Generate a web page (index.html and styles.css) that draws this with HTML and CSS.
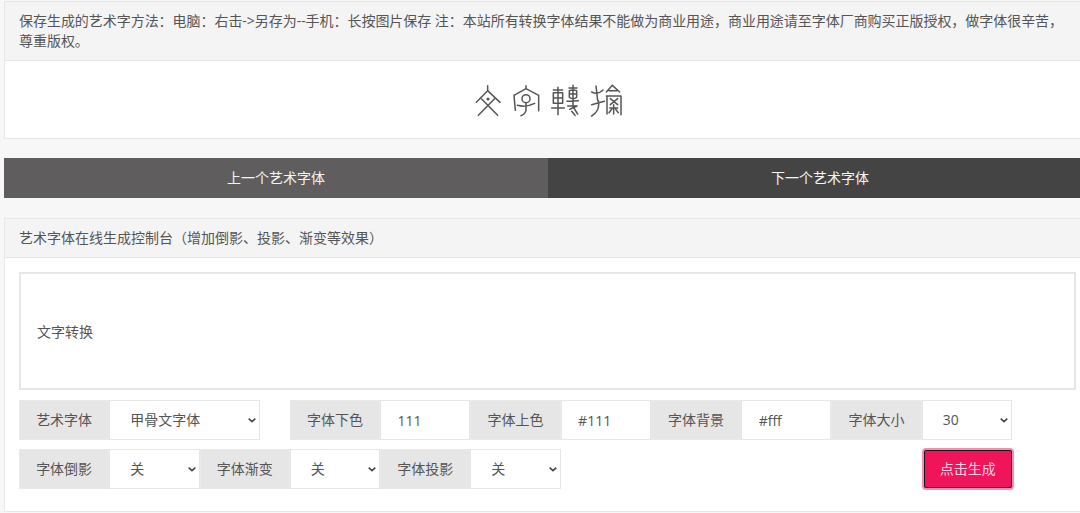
FILE: index.html
```html
<!DOCTYPE html>
<html lang="zh-CN">
<head>
<meta charset="utf-8">
<title>艺术字体在线生成</title>
<link rel="stylesheet" href="styles.css">
</head>
<body>
<section class="card">
  <div class="card-head tip">保存生成的艺术字方法：电脑：右击-&gt;另存为--手机：长按图片保存 注：本站所有转换字体结果不能做为商业用途，商业用途请至字体厂商购买正版授权，做字体很辛苦，尊重版权。</div>
  <div class="preview">
    <svg class="seal" viewBox="0 0 600 180" role="img" aria-label="文字转换">
      <g fill="none" stroke="#555" stroke-width="4.5" stroke-linecap="round" stroke-linejoin="round">
        <path d="M140 47V60M106 97L140 62L177 97M122 87L170 136M160 87L112 136"/>
        <circle cx="141" cy="87" r="2.5" fill="#444"/>
        <path d="M255 47V57M219 76L255 56L293 76M219 76L223 121M293 76V122"/>
        <circle cx="255" cy="86" r="12"/>
        <path d="M229 106Q255 113 281 100M255 98V122Q252 133 240 137"/>
        <path d="M351 52V134M337 60H365M337 68H365V100H337ZM337 84H365M332 114H370"/>
        <path d="M396 46V112M384 54H408M385 62Q396 58 407 62V82Q396 90 385 82ZM385 72H407M378 94L412 92M380 108H408L386 118M396 110L410 132M392 124L402 136"/>
        <path d="M452 66Q470 76 486 60M465 48L470 92M452 104L490 94M472 92Q478 122 452 138"/>
        <path d="M514 46L496 66M514 46L536 66M504 62H528M496 78H540M498 78V132M540 78V134M508 86L530 104M530 86L508 104M518 104V132M506 114L530 114M504 128L512 118M532 128L524 118"/>
      </g>
    </svg>
  </div>
</section>

<nav class="pager">
  <a class="pager-prev" href="#">上一个艺术字体</a>
  <a class="pager-next" href="#">下一个艺术字体</a>
</nav>

<section class="card console">
  <div class="card-head title">艺术字体在线生成控制台（增加倒影、投影、渐变等效果）</div>
  <div class="console-body">
    <textarea class="text-input">文字转换</textarea>
    <form class="controls">
      <label class="tag">艺术字体</label>
      <select class="field wide"><option>甲骨文字体</option></select>
      <label class="tag">字体下色</label>
      <input class="field" value="111">
      <label class="tag">字体上色</label>
      <input class="field" value="#111">
      <label class="tag">字体背景</label>
      <input class="field" value="#fff">
      <label class="tag">字体大小</label>
      <select class="field"><option>30</option></select>

      <label class="tag">字体倒影</label>
      <select class="field"><option>关</option></select>
      <label class="tag">字体渐变</label>
      <select class="field"><option>关</option></select>
      <label class="tag">字体投影</label>
      <select class="field"><option>关</option></select>
      <button class="generate" type="button">点击生成</button>
    </form>
  </div>
</section>
</body>
</html>
```
FILE: styles.css
```css
* {
  box-sizing: border-box;
}

html,
body {
  height: 513px;
  overflow: hidden;
}

body {
  margin: 0;
  padding: 1px 0 0 4px;
  background: #f7f7f7;
  color: #555;
  font: 14px/20px "Open Sans", "Noto Sans CJK SC", sans-serif;
}

.card {
  background: #fff;
  border: 1px solid #e8e8e8;
  border-right: 0;
}

.card-head {
  background: #f4f4f5;
  border-bottom: 1px solid #e6e6e6;
  color: #555;
}

.tip {
  height: 59px;
  padding: 9px 10px 0 14px;
  line-height: 20px;
  letter-spacing: -0.04px;
}

.preview {
  display: flex;
  justify-content: center;
  height: 77px;
  padding-top: 9px;
  padding-right: 4px;
}

.seal {
  display: block;
  width: 200px;
  height: 60px;
  filter: blur(0.35px);
}

.pager {
  display: flex;
  width: 1088px;
  height: 40px;
  margin-top: 19px;
}

.pager a {
  display: flex;
  flex: none;
  align-items: center;
  justify-content: center;
  width: 544px;
  color: #f4f4f4;
  text-decoration: none;
}

.pager-prev {
  background: #5f5d5d;
}

.pager-next {
  background: #444;
}

.console {
  height: 294px;
  margin-top: 20px;
}

.title {
  height: 39px;
  padding: 0 14px;
  line-height: 37px;
}

.console-body {
  padding: 14px 0 0 14px;
}

.text-input {
  display: block;
  width: 1057px;
  height: 118px;
  padding: 48px 16px 0;
  border: 2px solid #e6e6e6;
  border-radius: 0;
  background: #fff;
  color: #555;
  font: inherit;
  resize: none;
  outline: 0;
}

.controls {
  display: grid;
  grid-template-columns: repeat(11, 90.27px);
  grid-auto-rows: 40px;
  row-gap: 9px;
  margin-top: 10px;
}

.tag {
  display: flex;
  align-items: center;
  justify-content: center;
  background: #e6e6e6;
  border: 1px solid #e9e9e9;
  color: #555;
}

.field {
  width: 100%;
  height: 40px;
  border: 1px solid #e6e6e6;
  border-radius: 0;
  background: #fff;
  color: #555;
  font: inherit;
  outline: 0;
}

input.field {
  padding: 0 16.5px;
}

select.field {
  padding: 0 16px 0 20px;
  appearance: none;
  background-image: url("data:image/svg+xml,%3Csvg xmlns='http://www.w3.org/2000/svg' width='8' height='5'%3E%3Cpath d='M.7.7l3.3 3 3.3-3' fill='none' stroke='%23444' stroke-width='1.6'/%3E%3C/svg%3E");
  background-repeat: no-repeat;
  background-position: right 3px center;
  background-size: 8px 5px;
}

.wide {
  grid-column: span 2;
  width: calc(100% - 30px);
}

.generate {
  grid-column: 11;
  grid-row: 2;
  height: 40px;
  margin: 0 -1px 0 1px;
  border: 2px solid #1b1b1b;
  border-radius: 3px;
  outline: 2px solid #f48fb1;
  outline-offset: -1px;
  background: #f0145a;
  color: #ffd5e3;
  font: inherit;
  cursor: pointer;
}
```
